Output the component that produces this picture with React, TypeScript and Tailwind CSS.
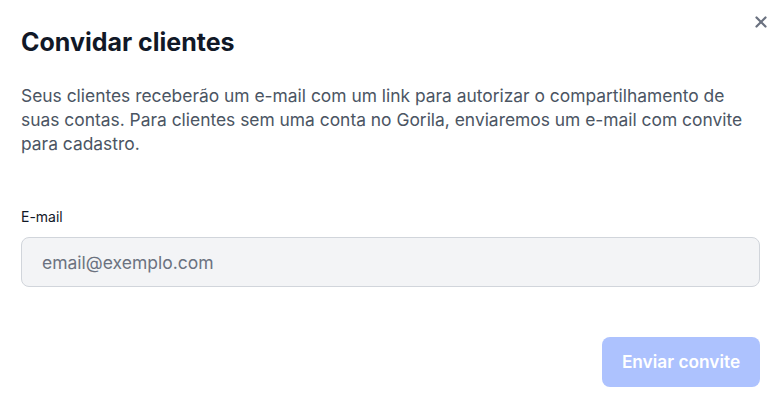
import { X } from "lucide-react"

export default function App() {
  return (
    <div
      className="relative w-[781px] h-[407px] bg-white px-[21px] pt-[26px] text-[#1f2937]"
      style={{ fontFamily: "Inter, 'Noto Sans', sans-serif" }}
    >
      {/* Close */}
      <button className="absolute right-[11px] top-[13px] text-[#6b7280]">
        <X className="w-[18px] h-[18px]" strokeWidth={3} />
      </button>

      <h2 className="text-[25px] leading-[32px] font-bold text-[#111827]">Convidar clientes</h2>

      <p className="mt-[26px] w-[740px] text-[17.4px] leading-[24px] text-[#4b5563]">
        Seus clientes receberão um e-mail com um link para autorizar o compartilhamento de suas
        contas. Para clientes sem uma conta no Gorila, enviaremos um e-mail com convite para
        cadastro.
      </p>

      <div className="mt-[51px] flex flex-col">
        <label className="text-[14px] leading-[20px] text-[#111827]">E-mail</label>
        <input
          type="email"
          placeholder="email@exemplo.com"
          className="mt-[10px] h-[50px] w-full rounded-[8px] border border-[#d1d5db] bg-[#f3f4f6] px-[20px] text-[17.5px] placeholder:text-[#6b7280] outline-none"
        />
      </div>

      <div className="mt-[50px] flex justify-end">
        <button className="h-[50px] w-[158px] rounded-[8px] bg-[#adc2fe] text-[17.3px] font-semibold text-white">
          Enviar convite
        </button>
      </div>
    </div>
  )
}
